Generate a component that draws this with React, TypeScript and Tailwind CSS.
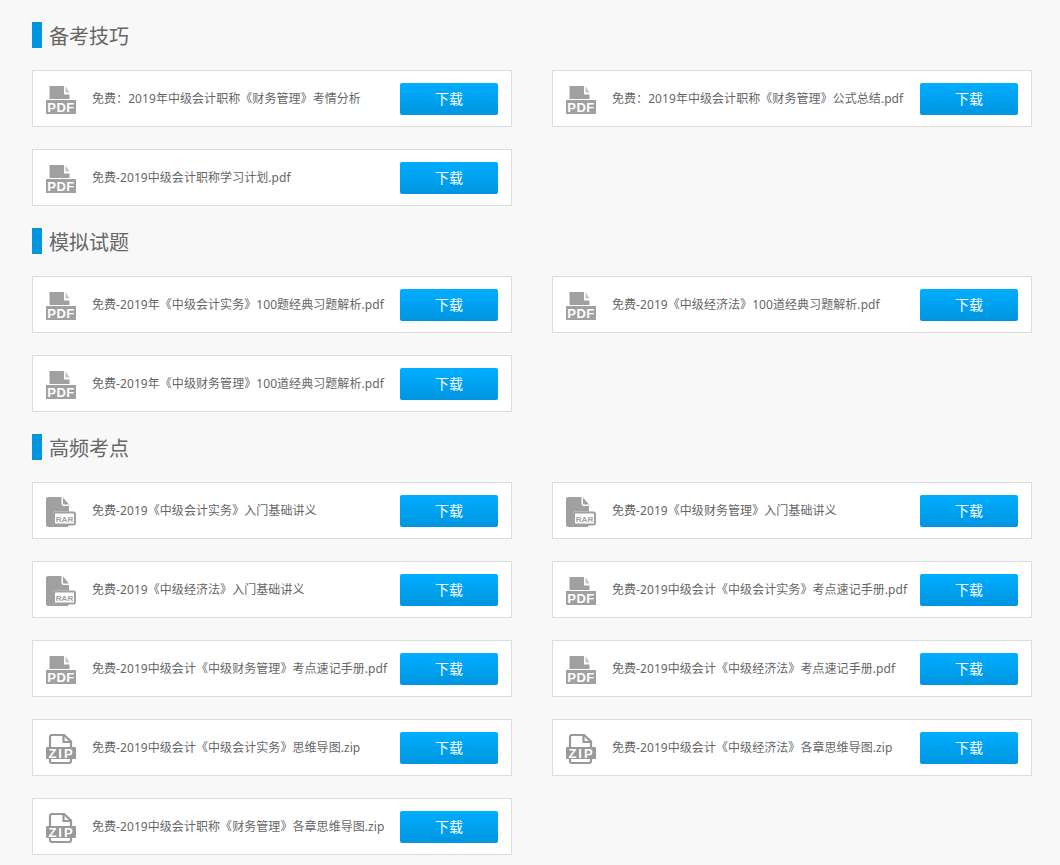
const PdfIcon = () => (
  <svg width="30" height="28" viewBox="0 0 30 28" className="shrink-0">
    <path d="M3.5 0H18v8.5h5.5V13H3.5z" fill="#a0a0a0" />
    <path d="M19.5 0l4 6.5h-4z" fill="#c4c4c4" />
    <rect x="0" y="14" width="30" height="14" fill="#a0a0a0" />
    <text x="15" y="26" textAnchor="middle" fontSize="13" fontWeight="700" letterSpacing="0.5" fill="#fff" fontFamily="'Liberation Sans', sans-serif">PDF</text>
  </svg>
);

const RarIcon = () => (
  <svg width="30" height="30" viewBox="0 0 30 30" className="shrink-0">
    <path d="M2 0h13.5v7a2 2 0 0 0 2 2h5.5v5.5H9a2 2 0 0 0-2 2V26a2 2 0 0 0 2 2h14a2 2 0 0 1-2 2H2a2 2 0 0 1-2-2V2a2 2 0 0 1 2-2z" fill="#a0a0a0" />
    <path d="M17 0.5l6 7h-6z" fill="#a0a0a0" />
    <rect x="8" y="15.5" width="21" height="12" rx="1.5" fill="#fff" stroke="#a0a0a0" strokeWidth="2" />
    <text x="18.5" y="24.5" textAnchor="middle" fontSize="8" fontWeight="700" fill="#a0a0a0" fontFamily="'Liberation Sans', sans-serif">RAR</text>
  </svg>
);

const ZipIcon = () => (
  <svg width="30" height="30" viewBox="0 0 30 30" className="shrink-0">
    <path d="M4 13V3a2 2 0 0 1 2-2h12l7 6.5V13" fill="none" stroke="#999999" strokeWidth="2.2" />
    <path d="M17.5 1v7h7.5" fill="none" stroke="#999999" strokeWidth="2.2" />
    <path d="M4 25v2a2 2 0 0 0 2 2h17a2 2 0 0 0 2-2v-2" fill="none" stroke="#999999" strokeWidth="2.2" />
    <rect x="0" y="13" width="30" height="12" rx="1" fill="#999999" />
    <text x="15.5" y="23.7" textAnchor="middle" fontSize="13" fontWeight="700" letterSpacing="2" fill="#fff" fontFamily="'Liberation Sans', sans-serif">ZIP</text>
  </svg>
);

type Kind = 'pdf' | 'rar' | 'zip';

const FileCard = ({ kind, name }: { kind: Kind; name: string }) => (
  <div className="flex h-[57px] items-center border border-[#dddddd] bg-white px-[13px]">
    <div className="mt-[3px] flex h-[30px] w-[30px] shrink-0 items-center justify-center">
      {kind === 'pdf' && <PdfIcon />}
      {kind === 'rar' && <RarIcon />}
      {kind === 'zip' && <ZipIcon />}
    </div>
    <span className="ml-4 flex-1 whitespace-nowrap text-xs tracking-[0.06px] text-[#666666]">{name}</span>
    <button className="h-8 w-[98px] shrink-0 rounded-[2px] bg-gradient-to-b from-[#00aeff] to-[#0095e0] text-sm text-white">
      下载
    </button>
  </div>
);

const Section = ({ title, files }: { title: string; files: [Kind, string][] }) => (
  <section>
    <div className="mb-[22px] flex h-[26px] items-center">
      <span className="mr-[7px] h-[26px] w-2.5 bg-[#0095dd]"></span>
      <h2 className="pt-1 text-xl font-normal text-[#666666]">{title}</h2>
    </div>
    <div className="grid grid-cols-[480px_480px] gap-x-10 gap-y-[22px] pb-[22px]">
      {files.map(([kind, name]) => (
        <FileCard key={name} kind={kind} name={name} />
      ))}
    </div>
  </section>
);

const sections: { title: string; files: [Kind, string][] }[] = [
  {
    title: '备考技巧',
    files: [
      ['pdf', '免费：2019年中级会计职称《财务管理》考情分析'],
      ['pdf', '免费：2019年中级会计职称《财务管理》公式总结.pdf'],
      ['pdf', '免费-2019中级会计职称学习计划.pdf'],
    ],
  },
  {
    title: '模拟试题',
    files: [
      ['pdf', '免费-2019年《中级会计实务》100题经典习题解析.pdf'],
      ['pdf', '免费-2019《中级经济法》100道经典习题解析.pdf'],
      ['pdf', '免费-2019年《中级财务管理》100道经典习题解析.pdf'],
    ],
  },
  {
    title: '高频考点',
    files: [
      ['rar', '免费-2019《中级会计实务》入门基础讲义'],
      ['rar', '免费-2019《中级财务管理》入门基础讲义'],
      ['rar', '免费-2019《中级经济法》入门基础讲义'],
      ['pdf', '免费-2019中级会计《中级会计实务》考点速记手册.pdf'],
      ['pdf', '免费-2019中级会计《中级财务管理》考点速记手册.pdf'],
      ['pdf', '免费-2019中级会计《中级经济法》考点速记手册.pdf'],
      ['zip', '免费-2019中级会计《中级会计实务》思维导图.zip'],
      ['zip', '免费-2019中级会计《中级经济法》各章思维导图.zip'],
      ['zip', '免费-2019中级会计职称《财务管理》各章思维导图.zip'],
    ],
  },
];

export default function App() {
  return (
    <div className="min-h-[865px] overflow-hidden bg-[#f8f8f8] pl-8 pt-[22px] font-['Noto_Sans','Noto_Sans_CJK_SC',sans-serif]">
      {sections.map((s) => (
        <Section key={s.title} title={s.title} files={s.files} />
      ))}
    </div>
  );
}
